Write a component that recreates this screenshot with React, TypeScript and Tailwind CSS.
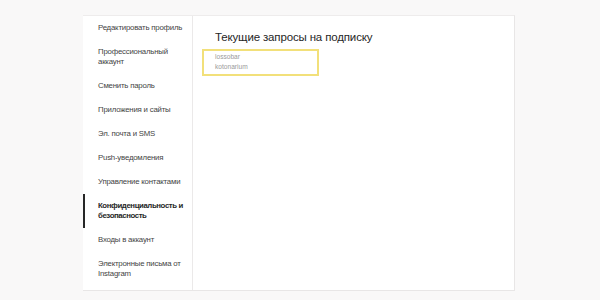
const items: { label: string; active?: boolean }[] = [
  { label: "Редактировать профиль" },
  { label: "Профессиональный аккаунт" },
  { label: "Сменить пароль" },
  { label: "Приложения и сайты" },
  { label: "Эл. почта и SMS" },
  { label: "Push-уведомления" },
  { label: "Управление контактами" },
  { label: "Конфиденциальность и безопасность", active: true },
  { label: "Входы в аккаунт" },
  { label: "Электронные письма от Instagram" },
];

export default function App() {
  return (
    <div
      className="w-[600px] h-[300px] bg-[#f9f8f8] pt-[15px] pl-[83px]"
      style={{ fontFamily: '"Liberation Sans", Arial, sans-serif' }}
    >
      <div className="flex w-[432px] h-[276px] bg-white border border-[#e8e6e6] border-l-0 border-t-[#eeecec]">
        <nav className="w-[110px] shrink-0 border-r border-[#ebe9e9] flex flex-col">
          {items.map((item) => (
            <div
              key={item.label}
              className={`flex items-center min-h-[24px] py-[7px] pl-[13px] pr-[4px] border-l-2 text-[7.8px] leading-[10px] ${
                item.active
                  ? "border-[#262626] text-[#262626] font-bold tracking-[-0.4px]"
                  : "border-transparent text-[#444] tracking-[-0.2px]"
              }`}
            >
              {item.label}
            </div>
          ))}
        </nav>
        <main className="flex-1 pt-[13px] pl-[9px]">
          <h1 className="ml-[13px] text-[11.5px] tracking-[-0.15px] leading-[16px] text-[#262626]">
            Текущие запросы на подписку
          </h1>
          <div className="mt-[4px] w-[117px] h-[27px] border-2 border-[#f2e07a] pl-[11px] pt-[1px] text-[6.6px] leading-[10px] text-[#9a9a9a]">
            <div>lossobar</div>
            <div>kotonarium</div>
          </div>
        </main>
      </div>
    </div>
  );
}
